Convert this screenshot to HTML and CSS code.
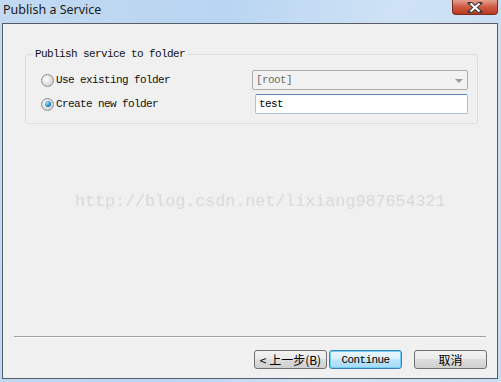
FILE: index.html
```html
<!DOCTYPE html>
<html lang="en">
<head>
    <meta charset="UTF-8">
    <title>Publish a Service</title>
    <link rel="stylesheet" href="styles.css">
</head>
<body>
    <div class="window">
        <div class="titlebar">
            <span class="title">Publish a Service</span>
            <div class="close">
                <svg width="16" height="11" viewBox="0 0 16 11">
                    <path d="M3 1 L13 10 M13 1 L3 10" stroke="#3b3b3b" stroke-width="4" stroke-linecap="square"/>
                    <path d="M3.5 1.5 L12.5 9.5 M12.5 1.5 L3.5 9.5" stroke="#fff" stroke-width="2"/>
                </svg>
            </div>
        </div>
        <div class="client">
            <fieldset class="group">
                <legend>Publish service to folder</legend>
                <div class="row">
                    <label class="option"><span class="radio"></span>Use existing folder</label>
                    <div class="select">[root]<span class="arrow"></span></div>
                </div>
                <div class="row">
                    <label class="option"><span class="radio checked"></span>Create new folder</label>
                    <div class="textbox">test</div>
                </div>
            </fieldset>
            <div class="spacer">
                <div class="watermark">http://blog.csdn.net/lixiang987654321</div>
            </div>
            <div class="separator"></div>
            <div class="buttons">
                <button class="btn cjk">&lt; 上一步(B)</button>
                <button class="btn default">Continue</button>
                <button class="btn cjk cancel">取消</button>
            </div>
        </div>
    </div>
</body>
</html>
```

FILE: styles.css
```css
body {
    margin: 0;
    width: 501px;
    height: 382px;
    overflow: hidden;
    font-family: "Liberation Mono", monospace;
}

/* cadre de la fenetre */
.window {
    height: 382px;
    display: flex;
    flex-direction: column;
    background: linear-gradient(100deg, #c2d9f1 0%, #b9d5f2 40%, #cfe2f5 70%, #c8ddf3 100%);
    padding: 0 3px 3px 2px;
    box-sizing: border-box;
}

.titlebar {
    height: 23px;
    display: flex;
    justify-content: space-between;
    align-items: flex-start;
}

.title {
    font-family: "Noto Sans", sans-serif;
    font-size: 12.5px;
    color: #1b1b1b;
    margin: 1px 0 0 1px;
}

.close {
    width: 44px;
    height: 14px;
    border: 1px solid #7a2b22;
    border-top: none;
    border-radius: 0 0 4px 4px;
    background: linear-gradient(#e6a08f, #cf5a42 50%, #b93a22 100%);
    display: flex;
    justify-content: center;
    align-items: center;
}

.client {
    flex: 1;
    display: flex;
    flex-direction: column;
    background-color: #f0f0f0;
    border: 1px solid #555e68;
    font-size: 11px;
    letter-spacing: -0.6px;
    color: #111;
}

/* groupe d'options */
.group {
    margin: 24px 19px 0 22px;
    padding: 10px 9px 9px 15px;
    border: 1px solid #d5dfe5;
    border-radius: 3px;
    display: flex;
    flex-direction: column;
    gap: 4px;
}

.group legend {
    padding: 0 2px;
    margin-left: -8px;
}

.row {
    display: flex;
    align-items: center;
    height: 20px;
}

.option {
    flex: 1;
    display: flex;
    align-items: center;
    gap: 2px;
}

.radio {
    width: 11px;
    height: 11px;
    border-radius: 50%;
    border: 1px solid #8e8f8f;
    background: radial-gradient(circle at 40% 40%, #ffffff, #d4d4d4 70%, #c4c4c4);
    display: flex;
    justify-content: center;
    align-items: center;
}

.radio.checked::after {
    content: "";
    width: 6px;
    height: 6px;
    border-radius: 50%;
    background: radial-gradient(circle at 35% 35%, #9fe1ff, #1f86c8 60%, #0b4f86);
}

.select, .textbox {
    height: 18px;
    display: flex;
    align-items: center;
    padding-left: 3px;
    border-radius: 2px;
}

.select {
    width: 207px;
    border: 1px solid #acacac;
    background: #f2f2f2;
    color: #6d6d6d;
    justify-content: space-between;
    padding-right: 4px;
}

.arrow {
    width: 0;
    height: 0;
    border-left: 4px solid transparent;
    border-right: 4px solid transparent;
    border-top: 4px solid #9a9a9a;
    margin-top: 2px;
}

.textbox {
    width: 208px;
    border: 1px solid #a6c4de;
    border-top-color: #5b87b0;
    background: #fff;
    color: #000;
}

.spacer {
    flex: 1;
}

.watermark {
    margin: 68px 0 0 72px;
    font-size: 16.7px;
    letter-spacing: 0;
    color: #dadada;
}

.separator {
    height: 1px;
    margin: 0 11px;
    background: #a0a0a0;
    border-bottom: 1px solid #f8f8f8;
}

.buttons {
    display: flex;
    justify-content: flex-end;
    gap: 2px;
    margin: 12px 10px 9px 0;
}

.btn {
    width: 73px;
    height: 19px;
    padding: 0;
    font-family: "Liberation Mono", monospace;
    font-size: 11px;
    letter-spacing: -0.6px;
    color: #000;
    border: 1px solid #707070;
    border-radius: 3px;
    background: linear-gradient(#f2f2f2 0%, #ebebeb 45%, #dddddd 50%, #cfcfcf 100%);
}

.btn.cjk {
    font-family: "Noto Sans CJK SC", sans-serif;
    font-size: 12px;
    letter-spacing: 0;
}

.btn.default {
    border-color: #3c7fb1;
    box-shadow: inset 0 0 0 1px #6ed0f7;
    background: linear-gradient(#eaf6fd 0%, #d9f0fc 45%, #bee6fd 50%, #a7d9f5 100%);
}

.btn.cancel {
    margin-left: 10px;
}
```
